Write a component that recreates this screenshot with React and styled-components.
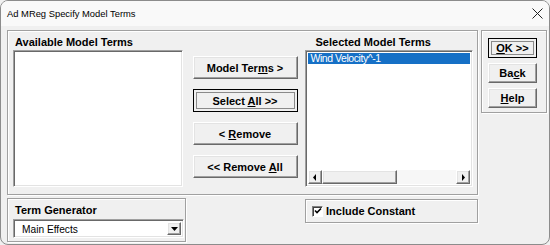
import React from 'react';
import styled, { createGlobalStyle, css } from 'styled-components';

const GlobalStyle = createGlobalStyle`
  html, body { margin: 0; padding: 0; background: #f0f0f0; }
  body { font-family: "Liberation Sans", Arial, sans-serif; color: #000; }
  * { box-sizing: border-box; }
`;

const Window = styled.div`
  width: 550px;
  height: 245px;
  border: 1px solid #8c8c8c;
  border-radius: 8px;
  background: #f0f0f0;
  overflow: hidden;
  display: flex;
  flex-direction: column;
`;

const TitleBar = styled.div`
  flex: none;
  height: 25px;
  display: flex;
  align-items: center;
  justify-content: space-between;
  padding: 0 6px 0 6px;
  background: #f9f9f9;
  font-size: 9.4px;
`;

const Body = styled.div`
  flex: 1;
  display: grid;
  grid-template-columns: 471px 66px;
  column-gap: 3px;
  align-items: start;
  padding: 4px 0 0 6px;
`;

const LeftColumn = styled.div`
  display: flex;
  flex-direction: column;
  gap: 3px;
`;

const Frame = styled.div`
  border: 1px solid #a0a0a0;
  box-shadow: inset 1px 1px 0 #fff, 1px 1px 0 #fff;
`;

const MainFrame = styled(Frame)`
  height: 165px;
  display: flex;
  padding: 4px 4px 0 5px;
`;

const ListColumn = styled.div`
  width: ${p => p.$w}px;
  margin-left: ${p => p.$ml || 0}px;
  display: flex;
  flex-direction: column;
`;

const Label = styled.div`
  height: 15px;
  line-height: 15px;
  font-size: 11px;
  font-weight: bold;
  padding-left: ${p => p.$pl || 2}px;
  white-space: nowrap;
`;

const sunken = css`
  border: 1px solid;
  border-color: #a0a0a0 #fff #fff #a0a0a0;
  box-shadow: inset 1px 1px 0 #696969, inset -1px -1px 0 #e3e3e3;
  background: #fff;
`;

const ListBox = styled.div`
  ${sunken};
  height: 137px;
  padding: 2px;
  display: flex;
  flex-direction: column;
`;

const Items = styled.div`
  flex: 1;
`;

const Item = styled.div`
  height: 11px;
  line-height: 11px;
  font-size: 10.5px;
  letter-spacing: -0.45px;
  padding-left: 3px;
  white-space: nowrap;
  ${p => p.$selected && css`
    background: #1670c6;
    color: #fff;
  `}
`;

const raised = css`
  border: 1px solid;
  border-color: #fff #696969 #696969 #fff;
  box-shadow: inset -1px -1px 0 #a0a0a0, inset 1px 1px 0 #e3e3e3;
  background: #f0f0f0;
`;

const ScrollBar = styled.div`
  height: 14px;
  display: flex;
  background: #f7f7f7;
`;

const ScrollButton = styled.div`
  ${raised};
  width: 14px;
  display: flex;
  align-items: center;
  justify-content: center;
`;

const Thumb = styled.div`
  ${raised};
  width: 75px;
`;

const Track = styled.div`
  flex: 1;
`;

const ButtonColumn = styled.div`
  width: 105px;
  margin: 21px 0 0 10px;
  display: flex;
  flex-direction: column;
  gap: 10px;
`;

const Button = styled.button`
  ${raised};
  width: ${p => p.$w || 105}px;
  height: ${p => p.$h || 23}px;
  padding: 0;
  font-family: "Liberation Sans", Arial, sans-serif;
  font-size: 11px;
  font-weight: bold;
  color: #000;
  white-space: nowrap;
  ${p => p.$focus && css`
    border-color: #000;
    box-shadow: inset 0 0 0 2px #f0f0f0, inset 0 0 0 3px #8a8a8a;
  `}
  u { text-underline-offset: 1px; }
`;

const BottomRow = styled.div`
  display: grid;
  grid-template-columns: 179px 1fr 173px;
  align-items: start;
`;

const GeneratorFrame = styled(Frame)`
  height: 44px;
  padding: 4px 1px 0 5px;
`;

const Combo = styled.div`
  ${sunken};
  margin-top: 1px;
  height: 19px;
  display: flex;
  align-items: stretch;
  padding: 2px;
`;

const ComboText = styled.div`
  flex: 1;
  font-size: 10.2px;
  line-height: 15px;
  padding-left: 6px;
`;

const DropButton = styled.div`
  ${raised};
  width: 14px;
  display: flex;
  align-items: center;
  justify-content: center;
`;

const ConstantFrame = styled(Frame)`
  grid-column: 3;
  margin-top: 1px;
  height: 24px;
  display: flex;
  align-items: center;
  gap: 3px;
  padding-left: 6px;
  font-size: 11px;
  font-weight: bold;
`;

const CheckBox = styled.div`
  width: 11px;
  height: 11px;
  border: 1px solid;
  border-color: #808080 #fff #fff #808080;
  box-shadow: inset 1px 1px 0 #404040;
  background: #fff;
  display: flex;
  align-items: center;
  justify-content: center;
`;

const SideFrame = styled(Frame)`
  height: 83px;
  padding: 7px 0 0 6px;
  display: flex;
  flex-direction: column;
  gap: 5px;
`;

const Arrow = ({ dir }) => (
  <svg width="6" height="7" viewBox="0 0 6 7">
    {dir === 'left' && <path d="M4 0 L1 3.5 L4 7 Z" fill="#000" />}
    {dir === 'right' && <path d="M2 0 L5 3.5 L2 7 Z" fill="#000" />}
  </svg>
);

export default function App() {
  return (
    <>
      <GlobalStyle />
      <Window>
        <TitleBar>
          <span>Ad MReg Specify Model Terms</span>
          <svg width="11" height="11" viewBox="0 0 11 11">
            <path d="M0.5 0.5 L10.5 10.5 M10.5 0.5 L0.5 10.5" stroke="#222" strokeWidth="1" />
          </svg>
        </TitleBar>
        <Body>
          <LeftColumn>
            <MainFrame>
              <ListColumn $w={170}>
                <Label>Available Model Terms</Label>
                <ListBox />
              </ListColumn>
              <ButtonColumn>
                <Button>Model Ter<u>m</u>s &gt;</Button>
                <Button $focus>Select <u>A</u>ll &gt;&gt;</Button>
                <Button>&lt; <u>R</u>emove</Button>
                <Button>&lt;&lt; Remove <u>A</u>ll</Button>
              </ButtonColumn>
              <ListColumn $w={169} $ml={7}>
                <Label $pl={11}>Selected Model Terms</Label>
                <ListBox>
                  <Items>
                    <Item $selected>Wind Velocity^-1</Item>
                  </Items>
                  <ScrollBar>
                    <ScrollButton><Arrow dir="left" /></ScrollButton>
                    <Thumb />
                    <Track />
                    <ScrollButton><Arrow dir="right" /></ScrollButton>
                  </ScrollBar>
                </ListBox>
              </ListColumn>
            </MainFrame>
            <BottomRow>
              <GeneratorFrame>
                <Label>Term Generator</Label>
                <Combo>
                  <ComboText>Main Effects</ComboText>
                  <DropButton><svg width="7" height="7" viewBox="0 0 7 7"><path d="M0 2 L7 2 L3.5 6 Z" fill="#000" /></svg></DropButton>
                </Combo>
              </GeneratorFrame>
              <ConstantFrame>
                <CheckBox>
                  <svg width="8" height="8" viewBox="0 0 8 8">
                    <path d="M1 3.5 L3 5.5 L7 1.5" stroke="#000" strokeWidth="1.6" fill="none" />
                  </svg>
                </CheckBox>
                Include Constant
              </ConstantFrame>
            </BottomRow>
          </LeftColumn>
          <SideFrame>
            <Button $w={49} $h={20} $focus><u>O</u>K &gt;&gt;</Button>
            <Button $w={49} $h={20}>Ba<u>c</u>k</Button>
            <Button $w={49} $h={20}><u>H</u>elp</Button>
          </SideFrame>
        </Body>
      </Window>
    </>
  );
}
